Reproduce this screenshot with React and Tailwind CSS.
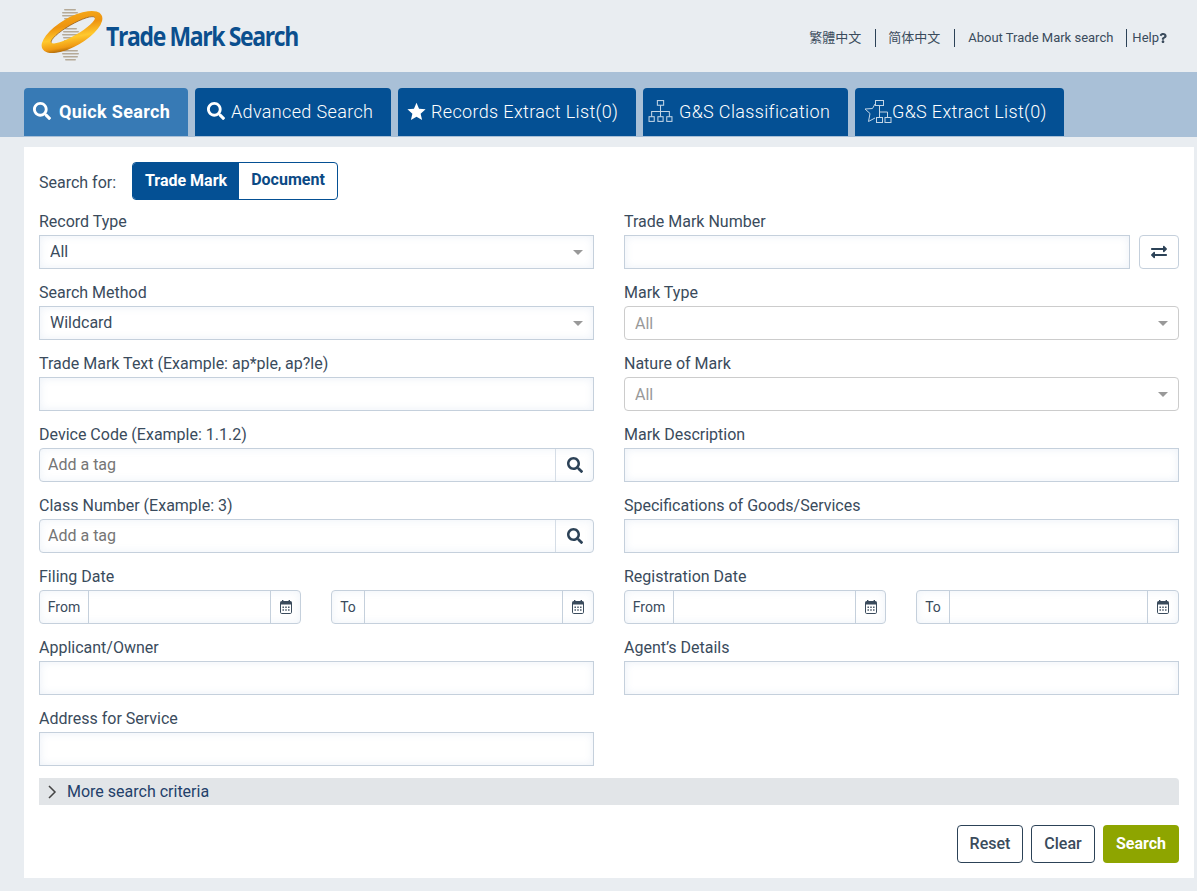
import React from 'react';
import { FaSearch, FaExchangeAlt, FaQuestion } from 'react-icons/fa';

const inputCls =
  'block w-full h-[34px] px-[10px] bg-white border border-[#c5d0dc] text-[16px] text-[#3a4b5c] outline-none shadow-[inset_0_0_8px_rgba(110,150,200,0.14)]';

const RingLogo = () => (
  <svg width="64" height="56" viewBox="0 0 64 56" className="shrink-0">
    <defs>
      <linearGradient id="ring" x1="0.35" y1="0" x2="0.6" y2="1">
        <stop offset="0" stopColor="#f6ad1c" />
        <stop offset="0.35" stopColor="#ee9410" />
        <stop offset="0.62" stopColor="#ffc92e" />
        <stop offset="0.82" stopColor="#f09a12" />
        <stop offset="1" stopColor="#6e3c06" />
      </linearGradient>
    </defs>
    <g fill="#b5aa98">
      <rect x="24" y="1" width="12" height="1.6" rx="0.8" />
      <rect x="22" y="4" width="16" height="1.6" rx="0.8" />
      <rect x="22" y="7" width="16" height="1.6" rx="0.8" />
      <rect x="24" y="10" width="12" height="1.6" rx="0.8" />
      <rect x="25" y="20" width="12" height="1.6" rx="0.8" />
      <rect x="23" y="23" width="16" height="1.6" rx="0.8" />
      <rect x="22" y="26" width="17" height="1.6" rx="0.8" />
      <rect x="23" y="29" width="16" height="1.6" rx="0.8" />
      <rect x="24" y="32" width="13" height="1.6" rx="0.8" />
      <rect x="23" y="42" width="15" height="1.6" rx="0.8" />
      <rect x="22" y="45" width="17" height="1.6" rx="0.8" />
      <rect x="23" y="48" width="15" height="1.6" rx="0.8" />
      <rect x="25" y="51" width="11" height="1.6" rx="0.8" />
    </g>
    <path
      fill="url(#ring)"
      fillRule="evenodd"
      d="M2.56 41A34 14 -30 1 0 61.44 7A34 14 -30 1 0 2.56 41ZM11.35 34.5A25 5.5 -30 1 0 54.65 9.5A25 5.5 -30 1 0 11.35 34.5Z"
    />
    <path
      fill="none"
      stroke="#8a4e08"
      strokeWidth="1"
      opacity="0.7"
      d="M11.35 34.5A25 5.5 -30 0 1 54.65 9.5"
    />
  </svg>
);

const StarIcon = ({ className }) => (
  <svg viewBox="0 0 24 24" fill="currentColor" className={className}>
    <path d="M12 1l3.2 7.6 8.3.7-6.3 5.4 1.9 8.1L12 18.5l-7.1 4.3 1.9-8.1L.5 9.3l8.3-.7z" />
  </svg>
);

const SitemapIcon = ({ className }) => (
  <svg viewBox="0 0 24 24" fill="none" stroke="currentColor" strokeWidth="1" className={className}>
    <rect x="9" y="1.5" width="6" height="4.5" />
    <path d="M12 6v6M3.5 17v-5h17v5M12 12v5" />
    <rect x="1" y="17" width="5" height="4.5" />
    <rect x="9.5" y="17" width="5" height="4.5" />
    <rect x="18" y="17" width="5" height="4.5" />
  </svg>
);

// star outline cut off by a small two-box tree
const ExtractIcon = () => (
  <svg width="28" height="25" viewBox="0 0 28 25" fill="none" stroke="currentColor" className="shrink-0 text-[#c3d5e6]">
    <path d="M11 5L8.5 9.5 1 10l5 4.5-1.5 8 6.5-3.500" />
    <rect x="11.500" y="1.500" width="8" height="5" />
    <path d="M15.500 6.500v12M15.500 13h8v5.500" />
    <rect x="12.500" y="18.500" width="6" height="5" />
    <rect x="21" y="18.500" width="6" height="5" />
  </svg>
);

const CalendarIcon = () => (
  <svg width="12" height="14" viewBox="0 0 12 14" className="text-[#3a4b5c]">
    <path fill="currentColor" d="M2 0h1.4v2H2zM8.6 0H10v2H8.600z" />
    <rect x="0.500" y="1.500" width="11" height="12" rx="1.200" fill="none" stroke="currentColor" />
    <rect x="0.500" y="1.500" width="11" height="3" fill="currentColor" />
    <path fill="currentColor" d="M2.500 6.500h1.400v1.400H2.500zM5.300 6.500h1.400v1.400H5.300zM8.100 6.500h1.400v1.400H8.100zM2.500 9.300h1.400v1.400H2.500zM5.300 9.300h1.400v1.400H5.300zM8.100 9.300h1.400v1.400H8.100z" />
  </svg>
);

const Caret = () => (
  <svg width="10" height="5" viewBox="0 0 10 5" className="absolute right-[11px] top-[15px] pointer-events-none">
    <path d="M0 0h10L5 5z" fill="#999" />
  </svg>
);

const Field = ({ label, children }) => (
  <div>
    <label className="block h-6 mb-[2px] pt-px leading-6 text-[16px] text-[#3a4b5c]">{label}</label>
    {children}
  </div>
);

const SelectBox = ({ value, disabled }) => (
  <div className="relative">
    <select
      disabled={disabled}
      defaultValue={value}
      className={
        disabled
          ? 'block w-full h-[34px] px-[10px] pt-[2px] appearance-none bg-white border border-[#ccc] rounded-[4px] text-[16px] text-[#999] outline-none'
          : inputCls + ' appearance-none'
      }
    >
      <option>{value}</option>
    </select>
    <Caret />
  </div>
);

const TagInput = () => (
  <div className="flex h-[34px] border border-[#c5d0dc] rounded-[4px] shadow-[inset_0_0_8px_rgba(110,150,200,0.12)]">
    <input placeholder="Add a tag" className="flex-1 min-w-0 px-2 text-[16px] outline-none bg-transparent placeholder:text-[#757575]" />
    <button className="w-[38px] flex items-center justify-center border-l border-[#d5dde6] text-[#2c4257]">
      <FaSearch className="w-4 h-4" />
    </button>
  </div>
);

const DateGroup = ({ label, labelW, calW }) => (
  <div className="flex h-[34px] border border-[#c5d0dc] rounded-[4px] shadow-[inset_0_0_8px_rgba(110,150,200,0.12)]">
    <span className={`${labelW} flex items-center justify-center border-r border-[#c5d0dc] text-[14px] text-[#3a4b5c]`}>{label}</span>
    <input className="flex-1 min-w-0 outline-none bg-transparent" />
    <span className={`${calW} flex items-center justify-center border-l border-[#c5d0dc]`}>
      <CalendarIcon />
    </span>
  </div>
);

const DateRange = () => (
  <div className="grid grid-cols-[262px_263px] gap-x-[30px]">
    <DateGroup label="From" labelW="w-[49px]" calW="w-[30px]" />
    <DateGroup label="To" labelW="w-[33px]" calW="w-[31px]" />
  </div>
);

const tabs = [
  { label: 'Quick Search', icon: <FaSearch className="w-[18px] h-[18px]" />, cls: 'w-[164px] pl-[9px] gap-[8px] bg-[#377ab5] font-bold' },
  { label: 'Advanced Search', icon: <FaSearch className="w-[18px] h-[18px]" />, cls: 'w-[196px] pl-[12px] gap-[6px] bg-[#045094] font-light' },
  { label: 'Records Extract List(0)', icon: <StarIcon className="w-[19px] h-[19px]" />, cls: 'w-[238px] pl-[9px] gap-[5px] bg-[#045094] font-light' },
  { label: 'G&S Classification', icon: <SitemapIcon className="w-[25px] h-[25px] text-[#c3d5e6]" />, cls: 'w-[205px] pl-[5px] gap-[6px] bg-[#045094] font-light' },
];

export default function App() {
  return (
    <div className="min-h-[891px] bg-[#e9edf1] font-['Roboto',sans-serif] text-[#3a4b5c]">
      <header className="h-[72px] flex items-center justify-between pl-[40px] pr-[30px]">
        <div className="flex items-center gap-[2px] -mt-[1px]">
          <RingLogo />
          <span className="origin-left scale-x-[0.85] font-['Open_Sans',sans-serif] font-bold text-[27px] leading-none tracking-[-1.6px] text-[#0b4f8e] whitespace-nowrap">
            Trade Mark Search
          </span>
        </div>
        <nav className="flex items-center text-[13px] text-[#3a4b5c] mt-[3px]">
          <a className="font-['Noto_Sans_CJK_TC',sans-serif] pr-[14px] leading-[16px] pb-[2px]">繁體中文</a>
          <a className="font-['Noto_Sans_CJK_SC',sans-serif] pl-[12px] pr-[14px] leading-[16px] pb-[2px] border-l border-[#2c4257]">简体中文</a>
          <a className="pl-[13px] pr-[13px] border-l border-[#2c4257] leading-[18px]">About Trade Mark search</a>
          <a className="pl-[5px] border-l border-[#2c4257] leading-[18px] flex items-center">
            Help<FaQuestion className="w-[8px] h-[10px] mt-[1px]" />
          </a>
        </nav>
      </header>

      <div className="h-[65px] bg-[#a9c0d7] flex items-end gap-[7px] pl-[24px] pb-[1px]">
        {tabs.map((t) => (
          <a key={t.label} className={`${t.cls} h-[48px] pb-[2px] flex items-center rounded-t-[4px] text-white text-[18px] tracking-[0.35px] whitespace-nowrap`}>
            {t.icon}
            {t.label}
          </a>
        ))}
        <a className="w-[209px] pl-[9px] h-[48px] pb-[2px] flex items-center rounded-t-[4px] bg-[#045094] text-white font-light text-[18px] tracking-[0.35px] whitespace-nowrap">
          <ExtractIcon />
          G&amp;S Extract List(0)
        </a>
      </div>

      <main className="ml-[24px] mr-[3px] mt-[10px] bg-white px-[15px] pt-[15px] pb-[15px]">
        <div className="flex items-center">
          <span className="w-[93px] text-[16px] mt-[4px]">Search for:</span>
          <div className="flex h-[38px] border border-[#045094] rounded-[4px] overflow-hidden">
            <button className="w-[106px] bg-[#045094] text-white text-[16px] font-bold -mt-[3px] pt-[3px] h-[39px]">Trade Mark</button>
            <button className="w-[98px] text-[#0b4a85] text-[16px] font-bold pb-[3px]">Document</button>
          </div>
        </div>

        <div className="grid grid-cols-2 gap-x-[30px] gap-y-[11px] mt-[9px]">
          <Field label="Record Type"><SelectBox value="All" /></Field>
          <Field label="Trade Mark Number">
            <div className="flex gap-[9px]">
              <input className={inputCls} />
              <button className="w-[40px] h-[34px] shrink-0 flex items-center justify-center border border-[#c5d0dc] rounded-[4px] text-[#2c4257]">
                <FaExchangeAlt className="w-4 h-4" />
              </button>
            </div>
          </Field>
          <Field label="Search Method"><SelectBox value="Wildcard" /></Field>
          <Field label="Mark Type"><SelectBox value="All" disabled /></Field>
          <Field label="Trade Mark Text (Example: ap*ple, ap?le)"><input className={inputCls} /></Field>
          <Field label="Nature of Mark"><SelectBox value="All" disabled /></Field>
          <Field label="Device Code (Example: 1.1.2)"><TagInput /></Field>
          <Field label="Mark Description"><input className={inputCls} /></Field>
          <Field label="Class Number (Example: 3)"><TagInput /></Field>
          <Field label="Specifications of Goods/Services"><input className={inputCls} /></Field>
          <Field label="Filing Date"><DateRange /></Field>
          <Field label="Registration Date"><DateRange /></Field>
          <Field label="Applicant/Owner"><input className={inputCls} /></Field>
          <Field label="Agent’s Details"><input className={inputCls} /></Field>
          <Field label="Address for Service"><input className={inputCls} /></Field>
        </div>

        <div className="mt-[12px] h-[27px] flex items-center pl-[8px] gap-[10px] bg-[#e2e5e8] rounded-tr-[4px] text-[16px] text-[#23406a]">
          <svg width="10" height="14" viewBox="0 0 10 14" fill="none" stroke="#444" strokeWidth="1.5">
            <path d="M2 1l6 6-6 6" />
          </svg>
          More search criteria
        </div>

        <div className="mt-[20px] flex justify-end gap-[8px]">
          <button className="w-[66px] h-[38px] border border-[#2c4257] rounded-[4px] text-[16px] font-medium">Reset</button>
          <button className="w-[64px] h-[38px] border border-[#2c4257] rounded-[4px] text-[16px] font-medium">Clear</button>
          <button className="w-[76px] h-[38px] bg-[#8ea500] rounded-[4px] text-white text-[16px] font-bold">Search</button>
        </div>
      </main>
    </div>
  );
}
